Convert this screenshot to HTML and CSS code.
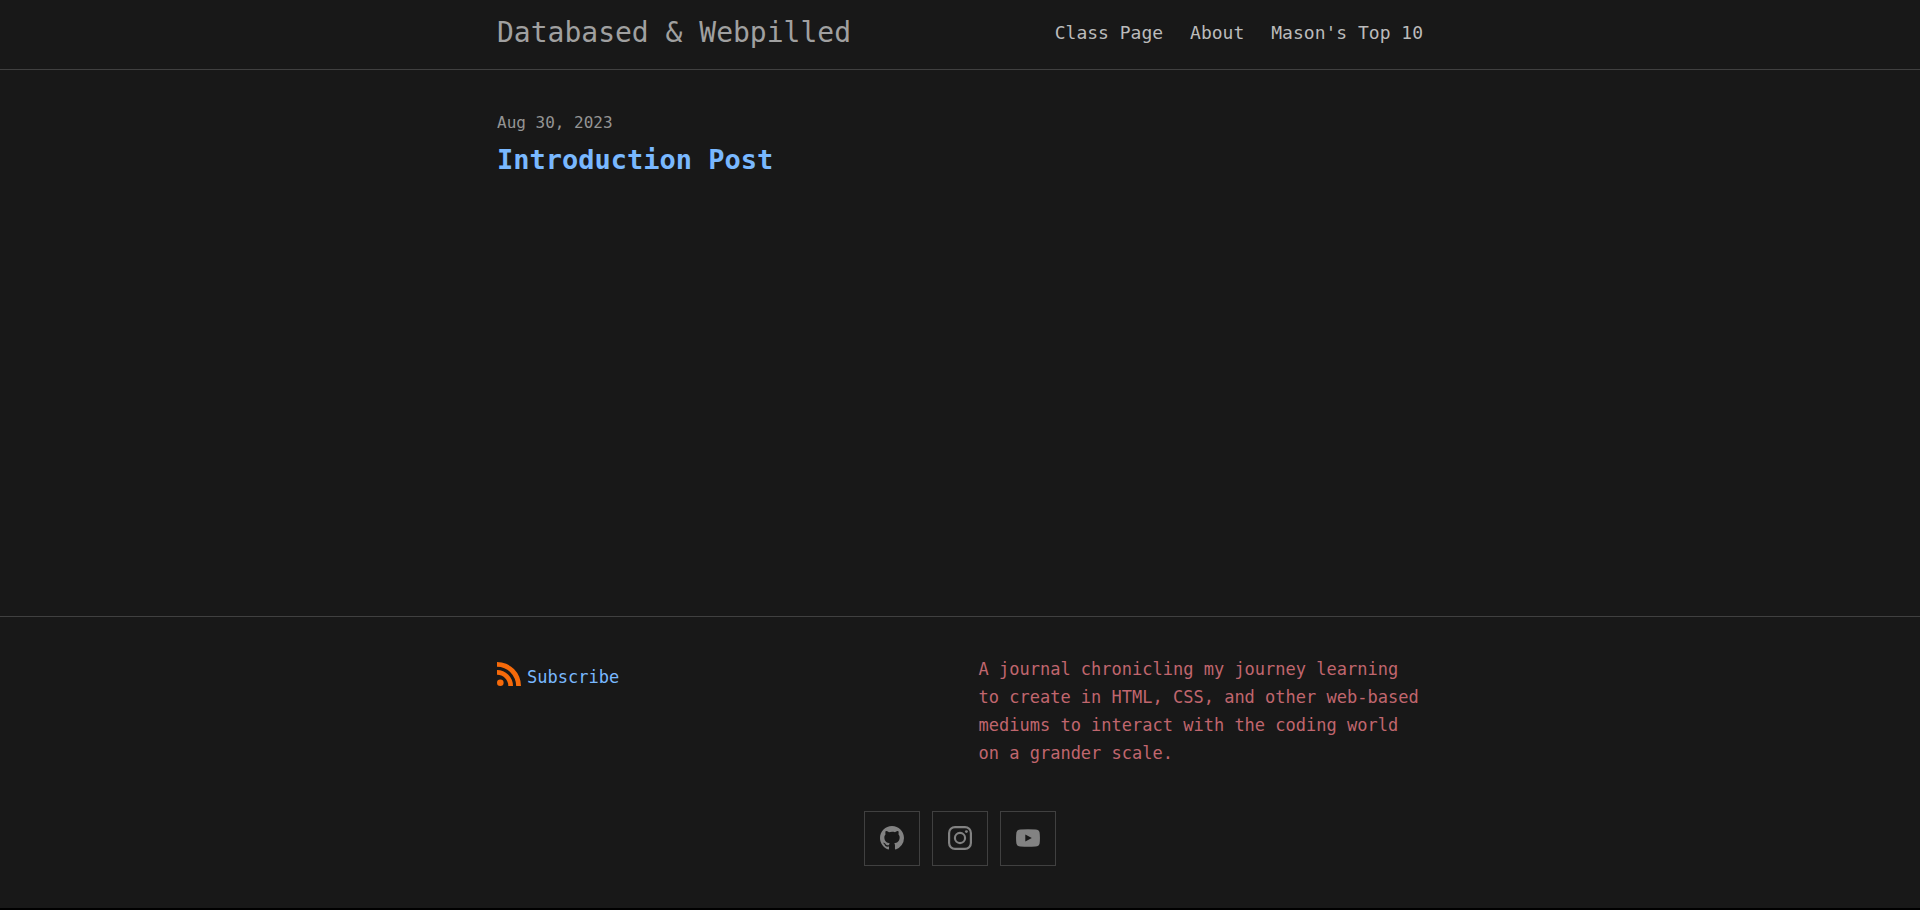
FILE: index.html
```html
<!DOCTYPE html>
<html lang="en">
<head>
  <meta charset="utf-8">
  <meta name="viewport" content="width=device-width, initial-scale=1">
  <title>Databased &amp; Webpilled</title>
  <link rel="stylesheet" href="styles.css">
</head>
<body>
  <header class="site-header">
    <div class="wrapper header-row">
      <a class="site-title" href="/">Databased &amp; Webpilled</a>
      <nav class="site-nav">
        <a class="page-link" href="/class">Class Page</a>
        <a class="page-link" href="/about">About</a>
        <a class="page-link" href="/top10">Mason's Top 10</a>
      </nav>
    </div>
  </header>

  <main class="page-content">
    <div class="wrapper">
      <ul class="post-list">
        <li>
          <time class="post-meta" datetime="2023-08-30">Aug 30, 2023</time>
          <h3 class="post-title"><a class="post-link" href="/introduction">Introduction Post</a></h3>
        </li>
      </ul>
    </div>
  </main>

  <footer class="site-footer">
    <div class="wrapper">
      <div class="footer-columns">
        <div>
          <a class="feed-link" href="/feed.xml">
            <svg class="feed-icon" viewBox="0 0 24 24" aria-hidden="true"><circle cx="3.3" cy="20.7" r="3.3"/><path d="M0 8v4.7A11.3 11.3 0 0 1 11.3 24H16A16 16 0 0 0 0 8zM0 0v4.8A19.2 19.2 0 0 1 19.2 24H24A24 24 0 0 0 0 0z"/></svg>
            <span>Subscribe</span>
          </a>
        </div>
        <p class="description">A journal chronicling my journey learning to create in HTML, CSS, and other web-based mediums to interact with the coding world on a grander scale.</p>
      </div>
      <ul class="social-list">
        <li><a class="social-link" href="https://github.com/" aria-label="GitHub">
          <svg class="social-icon" viewBox="0 0 16 16" aria-hidden="true"><path d="M8 0C3.58 0 0 3.582 0 8c0 3.535 2.292 6.533 5.471 7.591.4.074.547-.174.547-.385 0-.191-.008-.821-.011-1.489-2.226.484-2.695-.944-2.695-.944-.364-.925-.888-1.171-.888-1.171-.726-.497.055-.486.055-.486.803.056 1.226.824 1.226.824.714 1.223 1.872.869 2.328.665.072-.517.279-.87.508-1.07-1.777-.202-3.645-.888-3.645-3.954 0-.873.313-1.587.824-2.147-.083-.202-.357-1.015.077-2.117 0 0 .672-.215 2.201.82A7.672 7.672 0 0 1 8 3.868c.68.004 1.365.093 2.004.27 1.527-1.035 2.198-.82 2.198-.82.435 1.102.162 1.916.079 2.117.513.56.823 1.274.823 2.147 0 3.073-1.872 3.749-3.653 3.947.287.248.543.735.543 1.481 0 1.07-.009 1.932-.009 2.195 0 .213.144.462.55.384A8.003 8.003 0 0 0 16 8c0-4.418-3.582-8-8-8z"/></svg>
        </a></li>
        <li><a class="social-link" href="https://instagram.com/" aria-label="Instagram">
          <svg class="social-icon" viewBox="0 0 24 24" aria-hidden="true"><path fill-rule="evenodd" d="M7 0h10a7 7 0 0 1 7 7v10a7 7 0 0 1-7 7H7a7 7 0 0 1-7-7V7a7 7 0 0 1 7-7zm0 2.200A4.800 4.800 0 0 0 2.200 7v10A4.800 4.800 0 0 0 7 21.800h10a4.800 4.800 0 0 0 4.800-4.800V7A4.800 4.800 0 0 0 17 2.200zM12 5.840a6.160 6.160 0 1 1 0 12.320 6.160 6.160 0 0 1 0-12.320zM12 8a4 4 0 1 0 0 8 4 4 0 0 0 0-8z"/><circle cx="18.4" cy="5.600" r="1.440"/></svg>
        </a></li>
        <li><a class="social-link" href="https://youtube.com/" aria-label="YouTube">
          <svg class="social-icon" viewBox="0 0 24 24" aria-hidden="true"><path fill-rule="evenodd" d="M4.500 3.500Q12 3 19.500 3.500Q23 3.700 23.600 6.500Q24.300 12 23.600 17.500Q23 20.300 19.500 20.500Q12 21 4.500 20.500Q1 20.300 .4 17.500Q-.3 12 .4 6.500Q1 3.700 4.500 3.500zM9.300 8.600v6.800l6.500-3.400z"/></svg>
        </a></li>
      </ul>
    </div>
  </footer>
</body>
</html>
```

FILE: styles.css
```css
* {
  box-sizing: border-box;
}

html {
  background: #000;
}

body {
  display: flex;
  flex-direction: column;
  min-height: calc(100vh - 2px);
  margin: 0;
  background: #181818;
  color: #bbb;
  font: 17px/28px "DejaVu Sans Mono", monospace;
}

a {
  color: #79b8ff;
  text-decoration: none;
}

a:hover {
  text-decoration: underline;
}

.wrapper {
  width: 100%;
  max-width: 986px;
  margin: 0 auto;
  padding: 0 30px;
}

.site-header {
  border-bottom: 1px solid #404040;
}

.header-row {
  display: flex;
  flex-wrap: wrap;
  align-items: center;
  justify-content: space-between;
  padding-top: 5px;
  padding-bottom: 8px;
}

.site-title {
  color: #a0a0a0;
  font-size: 28px;
  line-height: 56px;
}

.site-nav {
  display: flex;
  flex-wrap: wrap;
  gap: 27px;
}

.page-link {
  color: #bbb;
  font-size: 18px;
}

.page-content {
  flex: 1;
  padding: 39px 0;
}

.post-list,
.social-list {
  margin: 0;
  padding: 0;
  list-style: none;
}

.post-meta {
  display: block;
  color: #949494;
  font-size: 16px;
}

.post-title {
  margin: 0;
  font-size: 27px;
  line-height: 46px;
}

.site-footer {
  padding: 38px 0 42px;
  border-top: 1px solid #404040;
}

.footer-columns {
  display: grid;
  grid-template-columns: 13fr 12fr;
}

.feed-link {
  display: inline-flex;
  align-items: center;
  gap: 6px;
  padding-top: 7px;
}

.feed-icon {
  width: 24px;
  height: 24px;
  margin-bottom: 6px;
  fill: #f66a0a;
}

.description {
  margin: 0;
  color: #c0666e;
}

.social-list {
  display: flex;
  justify-content: center;
  gap: 12px;
  margin-top: 44px;
}

.social-link {
  display: flex;
  justify-content: center;
  width: 56px;
  height: 55px;
  padding-top: 14px;
  border: 1px solid #404040;
}

.social-icon {
  width: 24px;
  height: 24px;
  fill: #828282;
}

@media (max-width: 700px) {
  .footer-columns {
    grid-template-columns: 1fr;
    gap: 24px;
  }
}
```
